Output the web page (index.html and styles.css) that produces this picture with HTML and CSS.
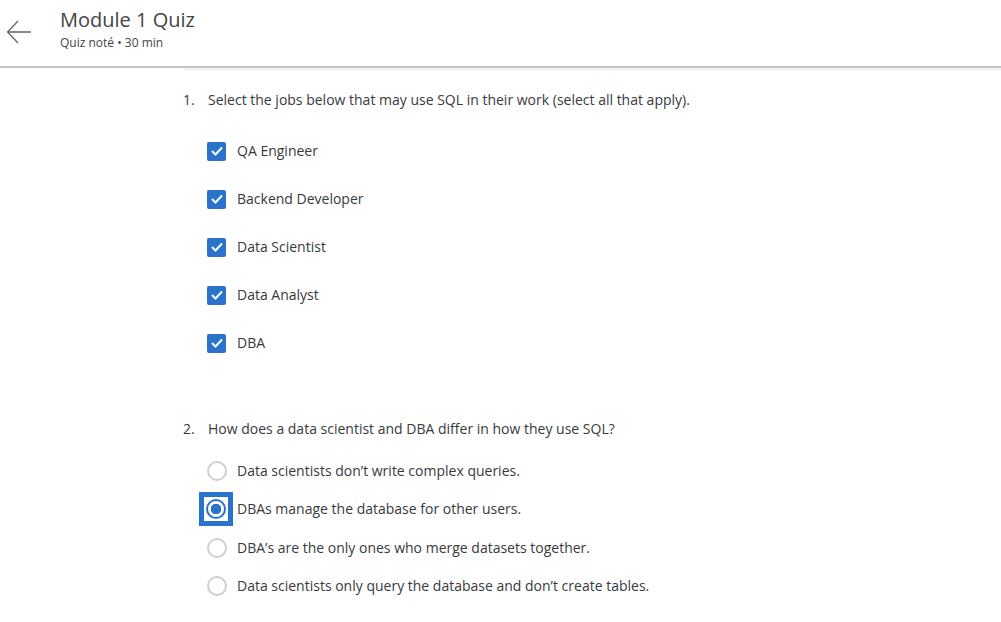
FILE: index.html
```html
<!DOCTYPE html>
<html>
<head>
<meta charset="utf-8">
<link rel="stylesheet" href="styles.css">
</head>
<body>
<header class="header">
  <button class="back" aria-label="Back">
    <svg width="26" height="24" viewBox="0 0 26 24"><path d="M25 12H2M12 1L1.5 12L12 23" fill="none" stroke="#666" stroke-width="1.3"/></svg>
  </button>
  <div class="titles">
    <h1 class="title">Module 1 Quiz</h1>
    <div class="sub">Quiz noté • 30 min</div>
  </div>
</header>
<div class="rule1"></div>
<div class="rule2"></div>
<main class="main">
  <section class="q q1">
    <div class="qtext"><span class="num">1.</span><span>Select the jobs below that may use SQL in their work (select all that apply).</span></div>
    <div class="checks">
      <label class="check"><span class="box"><svg width="12" height="10" viewBox="0 0 12 10"><path d="M1 5l3.5 3.5L11 1.5" fill="none" stroke="#fff" stroke-width="2"/></svg></span>QA Engineer</label>
      <label class="check"><span class="box"><svg width="12" height="10" viewBox="0 0 12 10"><path d="M1 5l3.5 3.5L11 1.5" fill="none" stroke="#fff" stroke-width="2"/></svg></span>Backend Developer</label>
      <label class="check"><span class="box"><svg width="12" height="10" viewBox="0 0 12 10"><path d="M1 5l3.5 3.5L11 1.5" fill="none" stroke="#fff" stroke-width="2"/></svg></span>Data Scientist</label>
      <label class="check"><span class="box"><svg width="12" height="10" viewBox="0 0 12 10"><path d="M1 5l3.5 3.5L11 1.5" fill="none" stroke="#fff" stroke-width="2"/></svg></span>Data Analyst</label>
      <label class="check"><span class="box"><svg width="12" height="10" viewBox="0 0 12 10"><path d="M1 5l3.5 3.5L11 1.5" fill="none" stroke="#fff" stroke-width="2"/></svg></span>DBA</label>
    </div>
  </section>
  <section class="q q2">
    <div class="qtext"><span class="num">2.</span><span>How does a data scientist and DBA differ in how they use SQL?</span></div>
    <div class="radios">
      <label class="radio"><span class="circle"></span>Data scientists don’t write complex queries.</label>
      <label class="radio selected"><span class="focus"><span class="dot"></span></span>DBAs manage the database for other users.</label>
      <label class="radio"><span class="circle"></span>DBA’s are the only ones who merge datasets together.</label>
      <label class="radio"><span class="circle"></span>Data scientists only query the database and don’t create tables.</label>
    </div>
  </section>
</main>
</body>
</html>
```
FILE: styles.css
```css
* { box-sizing: border-box; }
body {
  margin: 0;
  background: #fff;
  font-family: "Open Sans", "Noto Sans", sans-serif;
  color: #373a3c;
}
.header {
  display: flex;
  align-items: flex-start;
  height: 66px;
}
.back {
  border: 0;
  background: none;
  padding: 0;
  margin: 20px 0 0 6px;
  width: 26px;
  height: 24px;
}
.titles { margin-left: 28px; padding-top: 6px; }
.title {
  margin: 0;
  font-size: 20px;
  font-weight: 400;
  line-height: 28px;
  color: #444;
}
.sub {
  font-size: 12px;
  line-height: 16px;
  color: #444;
  margin-top: 1px;
}
.rule1 { height: 2px; background: #c4c4c4; }
.rule2 { height: 1px; background: #e3e3e3; margin: 1px 0 0 183px; }
.main { padding-left: 183px; }
.qtext {
  display: flex;
  font-size: 14px;
  line-height: 20px;
  color: #373a3c;
}
.num { width: 25px; }
.q1 { padding-top: 20px; }
.checks {
  display: flex;
  flex-direction: column;
  gap: 28px;
  padding: 31px 0 0 24px;
}
.check, .radio {
  display: flex;
  align-items: center;
  font-size: 14px;
  line-height: 20px;
  color: #373a3c;
}
.box {
  width: 19px;
  height: 19px;
  border-radius: 2px;
  background: #2a73cc;
  display: flex;
  align-items: center;
  justify-content: center;
  margin-right: 11px;
}
.q2 { padding-top: 66px; }
.radios {
  display: flex;
  flex-direction: column;
  gap: 18.3px;
  padding: 22px 0 0 24px;
}
.radio { height: 20px; }
.circle {
  width: 20px;
  height: 20px;
  border-radius: 50%;
  border: 2px solid #cfcfcf;
  margin-right: 10px;
  flex: none;
}
.focus {
  width: 34px;
  height: 34px;
  margin: 0 4px 0 -8px;
  border: 5px solid #2a73cc;
  background: #fff;
  display: flex;
  align-items: center;
  justify-content: center;
  flex: none;
}
.dot {
  width: 20px;
  height: 20px;
  border-radius: 50%;
  border: 2px solid #2a73cc;
  background: radial-gradient(circle, #2a73cc 0 5px, #fff 5.5px);
}
```
